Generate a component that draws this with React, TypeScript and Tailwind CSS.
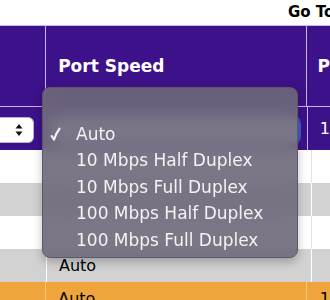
import React from 'react';

const speeds = ['Auto', '10 Mbps Half Duplex', '10 Mbps Full Duplex', '100 Mbps Half Duplex', '100 Mbps Full Duplex'];

const rows = [
  { bg: 'bg-white', line: 'border-[#e2e2e2]', text: '' },
  { bg: 'bg-[#d2d2d2]', line: 'border-white', text: '' },
  { bg: 'bg-white', line: 'border-[#e2e2e2]', text: '' },
  { bg: 'bg-[#d2d2d2]', line: 'border-white', text: 'Auto' },
  { bg: 'bg-[#f0a53c]', line: 'border-[#f6c98a]', text: 'Auto' },
];

const Check = () => (
  <svg width="11" height="14" viewBox="0 0 11 14">
    <path d="M1.2 8.2 L4 12.6 C5.6 7.8 7.4 4.2 10 1" fill="none" stroke="#f3f3f3" strokeWidth="2.1" strokeLinejoin="round" />
  </svg>
);

const App: React.FC = () => {
  return (
    <div className="relative w-[330px] h-[300px] overflow-hidden bg-white font-['DejaVu_Sans',sans-serif]">
      <div className="h-[25px] pl-[288px] pt-[1px] text-[15px] font-bold text-black whitespace-nowrap">Go To</div>

      {/* header */}
      <div className="flex h-[82px] bg-[#3d1189] border-t border-b border-[#c8b4ef] text-white">
        <div className="w-[46px]" />
        <div className="w-[265px] border-l border-[#c8b4ef] flex items-center pl-[12px] pt-[2px] text-[17px] font-bold whitespace-nowrap">Port Speed</div>
        <div className="flex-1 border-l border-[#c8b4ef] flex items-center pl-[11px] pt-[2px] text-[17px] font-bold">P</div>
      </div>

      {/* row with selects */}
      <div className="flex h-[43px] bg-[#3d1189] text-white">
        <div className="w-[46px] pt-[10px]">
          <div className="w-[34px] h-[26px] bg-white rounded-r-[6px] border border-l-0 border-[#b9b0d6] flex items-center justify-end pr-[10px]">
            <svg width="8" height="14" viewBox="0 0 8 14">
              <path d="M4 1 L7.5 5.5 L0.5 5.5 Z" fill="#111" />
              <path d="M4 13 L7.5 8.5 L0.5 8.5 Z" fill="#111" />
            </svg>
          </div>
        </div>
        <div className="w-[265px] border-l border-[#c8b4ef] pt-[10px] pl-[5px]">
          <div className="w-[247px] h-[26px] bg-white rounded-[7px] ring-[3px] ring-[#3e6fd8]/80" />
        </div>
        <div className="flex-1 border-l border-[#c8b4ef] flex items-center pl-[12px] text-[16px]">1</div>
      </div>

      {rows.map((r, i) => (
        <div key={i} className={`flex h-[33px] ${r.bg} text-black text-[16px]`}>
          <div className="w-[46px]" />
          <div className={`w-[265px] border-l ${r.line} flex items-center pl-[12px]`}>{r.text}</div>
          <div className={`flex-1 border-l ${r.line} flex items-center pl-[13px]`}>{i === 4 ? '1' : ''}</div>
        </div>
      ))}

      {/* open popup menu */}
      <div className="absolute left-[42px] top-[87px] w-[256px] h-[171px] rounded-[8px] bg-[rgba(110,104,122,0.9)] backdrop-blur-sm border border-[#5d5866] shadow-[0_4px_10px_rgba(0,0,0,0.25)] pt-[33px] text-[17px] text-[#f3f3f3]">
        {speeds.map((s, i) => (
          <div key={s} className="flex items-center h-[26.5px] whitespace-nowrap">
            <span className="w-[33px] pl-[7px] flex items-center">{i === 0 ? <Check /> : null}</span>
            <span>{s}</span>
          </div>
        ))}
      </div>
    </div>
  );
};

export default App;
